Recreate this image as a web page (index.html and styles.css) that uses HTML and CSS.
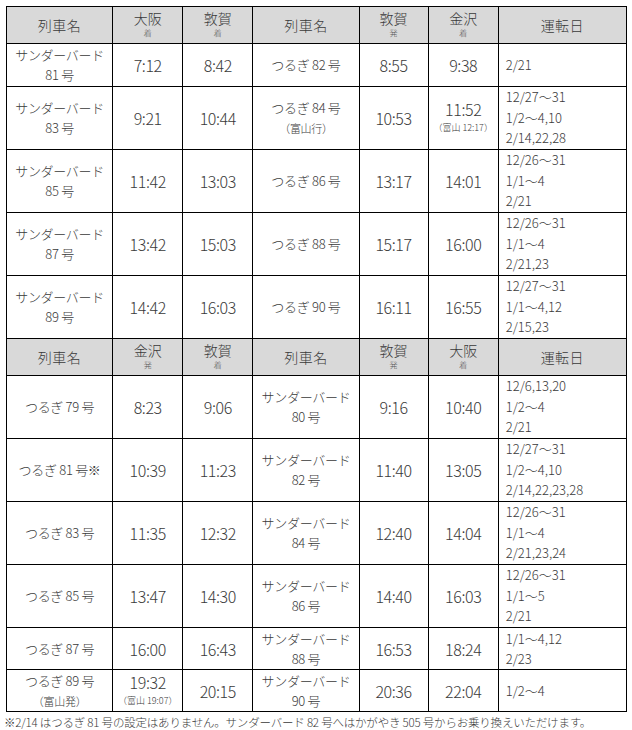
FILE: index.html
```html
<!DOCTYPE html>
<html lang="ja">
<head>
<meta charset="utf-8">
<link rel="stylesheet" href="styles.css">
</head>
<body>
<div class="page">
<table class="tt">
<colgroup>
<col class="c-name"><col class="c-time"><col class="c-time"><col class="c-name"><col class="c-time2"><col class="c-time"><col class="c-days">
</colgroup>
<tr class="head">
<th><span class="hn">列車名</span></th>
<th><span class="hs">大阪</span><span class="hsub">着</span></th>
<th><span class="hs">敦賀</span><span class="hsub">着</span></th>
<th><span class="hn">列車名</span></th>
<th><span class="hs">敦賀</span><span class="hsub">発</span></th>
<th><span class="hs">金沢</span><span class="hsub">着</span></th>
<th><span class="hn">運転日</span></th>
</tr>
<tr class="r2">
<td class="nm">サンダーバード<br>81 号</td><td class="tm">7:12</td><td class="tm">8:42</td>
<td class="nm">つるぎ 82 号</td><td class="tm">8:55</td><td class="tm">9:38</td>
<td class="dy">2/21</td>
</tr>
<tr class="r3">
<td class="nm">サンダーバード<br>83 号</td><td class="tm">9:21</td><td class="tm">10:44</td>
<td class="nm">つるぎ 84 号<span class="note">（富山行）</span></td><td class="tm">10:53</td><td class="tm">11:52<span class="tsub">（富山 12:17）</span></td>
<td class="dy">12/27～31<br>1/2～4,10<br>2/14,22,28</td>
</tr>
<tr class="r3">
<td class="nm">サンダーバード<br>85 号</td><td class="tm">11:42</td><td class="tm">13:03</td>
<td class="nm">つるぎ 86 号</td><td class="tm">13:17</td><td class="tm">14:01</td>
<td class="dy">12/26～31<br>1/1～4<br>2/21</td>
</tr>
<tr class="r3">
<td class="nm">サンダーバード<br>87 号</td><td class="tm">13:42</td><td class="tm">15:03</td>
<td class="nm">つるぎ 88 号</td><td class="tm">15:17</td><td class="tm">16:00</td>
<td class="dy">12/26～31<br>1/1～4<br>2/21,23</td>
</tr>
<tr class="r3">
<td class="nm">サンダーバード<br>89 号</td><td class="tm">14:42</td><td class="tm">16:03</td>
<td class="nm">つるぎ 90 号</td><td class="tm">16:11</td><td class="tm">16:55</td>
<td class="dy">12/27～31<br>1/1～4,12<br>2/15,23</td>
</tr>
<tr class="head">
<th><span class="hn">列車名</span></th>
<th><span class="hs">金沢</span><span class="hsub">発</span></th>
<th><span class="hs">敦賀</span><span class="hsub">着</span></th>
<th><span class="hn">列車名</span></th>
<th><span class="hs">敦賀</span><span class="hsub">発</span></th>
<th><span class="hs">大阪</span><span class="hsub">着</span></th>
<th><span class="hn">運転日</span></th>
</tr>
<tr class="r3">
<td class="nm">つるぎ 79 号</td><td class="tm">8:23</td><td class="tm">9:06</td>
<td class="nm">サンダーバード<br>80 号</td><td class="tm">9:16</td><td class="tm">10:40</td>
<td class="dy">12/6,13,20<br>1/2～4<br>2/21</td>
</tr>
<tr class="r3">
<td class="nm">つるぎ 81 号※</td><td class="tm">10:39</td><td class="tm">11:23</td>
<td class="nm">サンダーバード<br>82 号</td><td class="tm">11:40</td><td class="tm">13:05</td>
<td class="dy">12/27～31<br>1/2～4,10<br>2/14,22,23,28</td>
</tr>
<tr class="r3">
<td class="nm">つるぎ 83 号</td><td class="tm">11:35</td><td class="tm">12:32</td>
<td class="nm">サンダーバード<br>84 号</td><td class="tm">12:40</td><td class="tm">14:04</td>
<td class="dy">12/26～31<br>1/1～4<br>2/21,23,24</td>
</tr>
<tr class="r3">
<td class="nm">つるぎ 85 号</td><td class="tm">13:47</td><td class="tm">14:30</td>
<td class="nm">サンダーバード<br>86 号</td><td class="tm">14:40</td><td class="tm">16:03</td>
<td class="dy">12/26～31<br>1/1～5<br>2/21</td>
</tr>
<tr class="r2b">
<td class="nm">つるぎ 87 号</td><td class="tm">16:00</td><td class="tm">16:43</td>
<td class="nm">サンダーバード<br>88 号</td><td class="tm">16:53</td><td class="tm">18:24</td>
<td class="dy">1/1～4,12<br>2/23</td>
</tr>
<tr class="r2b">
<td class="nm">つるぎ 89 号<span class="note">（富山発）</span></td><td class="tm">19:32<span class="tsub">（富山 19:07）</span></td><td class="tm">20:15</td>
<td class="nm">サンダーバード<br>90 号</td><td class="tm">20:36</td><td class="tm">22:04</td>
<td class="dy">1/2～4</td>
</tr>
</table>
<p class="foot">※2/14 はつるぎ 81 号の設定はありません。サンダーバード 82 号へはかがやき 505 号からお乗り換えいただけます。</p>
</div>
</body>
</html>
```
FILE: styles.css
```css
html, body {
  margin: 0;
  padding: 0;
  background: #fff;
}
body {
  font-family: "Noto Sans CJK JP", "Noto Sans", sans-serif;
  font-weight: 300;
  color: #3a3a3a;
}
.page {
  padding: 6px 4px 0 4px;
}
.tt {
  border-collapse: collapse;
  table-layout: fixed;
  width: 621px;
  margin-left: 2px;
}
.c-name { width: 106px; }
.c-time { width: 70px; }
.c-time2 { width: 69px; }
.c-days { width: 128px; }
.tt th, .tt td {
  border: 1px solid #000;
  padding: 0;
  text-align: center;
  vertical-align: middle;
  font-weight: 300;
  overflow: hidden;
}
.head th {
  background: #d9d9d9;
  height: 36px;
}
.hn {
  display: block;
  font-size: 14px;
  line-height: 18px;
  letter-spacing: 0.5px;
}
.hs {
  display: block;
  font-size: 14px;
  line-height: 18px;
  margin-top: -2px;
}
.hsub {
  display: block;
  font-size: 8px;
  line-height: 12px;
  color: #555;
}
.r2 td { height: 42px; }
.r3 td { height: 62px; }
.r2b td { height: 41px; }
.nm {
  font-size: 13px;
  line-height: 20px;
  letter-spacing: -0.3px;
}
.note {
  display: block;
  font-size: 11px;
  line-height: 20px;
}
.tm {
  font-size: 16px;
  line-height: 20px;
  letter-spacing: -0.4px;
}
.tsub {
  display: block;
  font-size: 9px;
  line-height: 18px;
  letter-spacing: 0;
}
.dy {
  text-align: left !important;
  padding-left: 7px !important;
  font-size: 13px;
  line-height: 20.6px;
}
.r2b .dy { line-height: 20px; }
.foot {
  margin: 2px 0 0 0;
  font-size: 11.5px;
  line-height: 16px;
  letter-spacing: -0.2px;
  white-space: nowrap;
}
```
